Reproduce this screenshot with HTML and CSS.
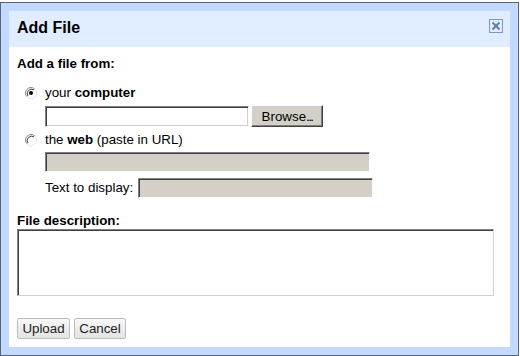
FILE: index.html
```html
<!DOCTYPE html>
<html>
<head>
<meta charset="utf-8">
<link rel="stylesheet" href="styles.css">
</head>
<body>
<div class="dialog">
  <div class="header">
    <div class="title">Add File</div>
    <div class="close">
      <svg width="14" height="14" viewBox="0 0 14 14">
        <rect x="0.5" y="0.5" width="13" height="13" fill="none" stroke="#7f97bd"/>
        <path d="M3.5 3.5 L10.5 10.5 M10.5 3.5 L3.5 10.5" stroke="#5f7fb3" stroke-width="2"/>
      </svg>
    </div>
  </div>
  <div class="body">
    <div class="label-bold first">Add a file from:</div>
    <div class="radio-row r1">
      <svg class="radio" width="12" height="12" viewBox="0 0 12 12">
        <circle cx="6" cy="6" r="5.5" fill="#fff"/>
        <path d="M2.11 9.89 A5.5 5.5 0 0 1 9.89 2.11" fill="none" stroke="#8a8a8a" stroke-width="1"/>
        <path d="M9.89 2.11 A5.5 5.5 0 0 1 2.11 9.89" fill="none" stroke="#e6e6e6" stroke-width="1"/>
        <path d="M3 9 A4.3 4.3 0 0 1 9 3" fill="none" stroke="#404040" stroke-width="1"/>
        <circle cx="6" cy="6" r="2" fill="#000"/>
      </svg>
      <span>your <b>computer</b></span>
    </div>
    <div class="file-row">
      <input class="field file-field" type="text">
      <button class="browse" type="button">Browse<span class="dots">...</span></button>
    </div>
    <div class="radio-row r2">
      <svg class="radio" width="12" height="12" viewBox="0 0 12 12">
        <circle cx="6" cy="6" r="5.5" fill="#fff"/>
        <path d="M2.11 9.89 A5.5 5.5 0 0 1 9.89 2.11" fill="none" stroke="#8a8a8a" stroke-width="1"/>
        <path d="M9.89 2.11 A5.5 5.5 0 0 1 2.11 9.89" fill="none" stroke="#e6e6e6" stroke-width="1"/>
        <path d="M3 9 A4.3 4.3 0 0 1 9 3" fill="none" stroke="#404040" stroke-width="1"/>
      </svg>
      <span>the <b>web</b> (paste in URL)</span>
    </div>
    <input class="field disabled url-field" type="text" disabled>
    <div class="display-row">
      <span>Text to display:</span>
      <input class="field disabled display-field" type="text" disabled>
    </div>
    <div class="label-bold desc-label">File description:</div>
    <textarea class="field desc"></textarea>
    <div class="buttons">
      <button class="btn upload" type="button">Upload</button>
      <button class="btn cancel" type="button">Cancel</button>
    </div>
  </div>
</div>
</body>
</html>
```

FILE: styles.css
```css
html, body {
  margin: 0;
  padding: 0;
  background: #ffffff;
}

body {
  font-family: "Liberation Sans", Arial, sans-serif;
  font-size: 13.33px;
  color: #000;
}

.dialog {
  box-sizing: border-box;
  margin-top: 2px;
  width: 519px;
  height: 354px;
  border: 1px solid #56657a;
  background: #c3d9ff;
  padding: 8px;
  display: flex;
  flex-direction: column;
}

.header {
  box-sizing: border-box;
  height: 36px;
  background: #e0ecff;
  display: flex;
  align-items: flex-start;
  justify-content: space-between;
  padding: 7px 7px 0 8px;
}

.title {
  font-size: 16px;
  font-weight: bold;
  line-height: 20px;
}

.close {
  margin-top: 1px;
  width: 14px;
  height: 14px;
  display: flex;
}

.body {
  flex: 1;
  background: #ffffff;
  padding: 0 8px;
  display: flex;
  flex-direction: column;
  align-items: flex-start;
}

.label-bold {
  font-weight: bold;
  line-height: 16px;
}

.first {
  margin-top: 9px;
}

.radio-row {
  display: flex;
  align-items: center;
  gap: 8px;
  height: 16px;
  line-height: 16px;
  padding-left: 8px;
}

.r1 {
  margin-top: 13px;
}

.r2 {
  margin-top: 5px;
}

.radio {
  display: block;
}

.field {
  box-sizing: border-box;
  margin: 0;
  padding: 0 3px;
  font-family: inherit;
  font-size: 13.33px;
  border-style: solid;
  border-width: 1px;
  border-color: #808080 #ffffff #ffffff #808080;
  box-shadow: inset 1px 1px 0 #404040, inset -1px -1px 0 #d4d0c8;
  background: #ffffff;
  outline: none;
}

.disabled {
  background: #d4d0c8;
}

.file-row {
  margin-top: 4px;
  margin-left: 28px;
  display: flex;
  align-items: flex-end;
  gap: 2px;
}

.file-field {
  width: 204px;
  height: 21px;
}

.browse {
  box-sizing: border-box;
  width: 72px;
  height: 22px;
  margin: 0;
  padding: 0;
  font-family: inherit;
  font-size: 13.33px;
  color: #000;
  background: #d4d0c8;
  border-style: solid;
  border-width: 1px;
  border-color: #ffffff #404040 #404040 #ffffff;
  box-shadow: inset -1px -1px 0 #808080;
}

.dots {
  letter-spacing: -1.6px;
}

.url-field {
  margin-top: 4px;
  margin-left: 28px;
  width: 325px;
  height: 20px;
}

.display-row {
  margin-top: 6px;
  margin-left: 28px;
  display: flex;
  align-items: center;
  gap: 5px;
  height: 20px;
  line-height: 20px;
}

.display-field {
  width: 235px;
  height: 20px;
}

.desc-label {
  margin-top: 15px;
}

.desc {
  width: 477px;
  height: 67px;
  resize: none;
  border-color: #808080 #d4d0c8 #d4d0c8 #808080;
  box-shadow: inset 1px 1px 0 #404040;
}

.buttons {
  margin-top: 22px;
  display: flex;
  gap: 4px;
}

.btn {
  box-sizing: border-box;
  height: 21px;
  margin: 0;
  padding: 0;
  font-family: inherit;
  font-size: 13.33px;
  color: #222;
  background: linear-gradient(#f8f8f8, #e3e3e3);
  border: 1px solid #bdbdbd;
  border-radius: 2px;
}

.upload {
  width: 53px;
}

.cancel {
  width: 52px;
}
```
